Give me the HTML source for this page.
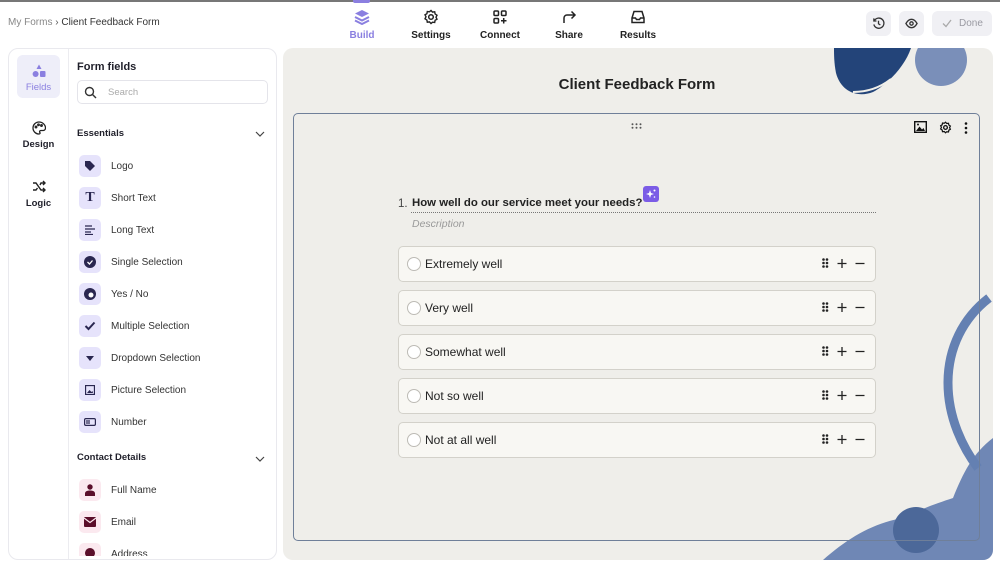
<!DOCTYPE html>
<html><head><meta charset="utf-8">
<style>
*{box-sizing:border-box;margin:0;padding:0}
body{width:1000px;height:568px;overflow:hidden;background:#fff;font-family:"Liberation Sans",sans-serif;color:#1f1f2a;position:relative}
.a{position:absolute}
.nav{position:absolute;top:9px;width:70px;text-align:center;font-size:10px;font-weight:bold;color:#222}
.nav svg{display:block;margin:0 auto 5px}
.btn{position:absolute;top:11px;height:25px;border-radius:6px;background:#f0f0f4}
.fi{position:absolute;left:79px;width:22px;height:22px;border-radius:5px;background:#e6e3fb}
.fl{position:absolute;left:111px;font-size:10px;color:#333}
.opt{position:absolute;left:398px;width:478px;height:36px;border:1px solid #d3d1ca;border-radius:5px;background:#f8f7f3}
.opt .r{position:absolute;left:8px;top:10px;width:14px;height:14px;border:1px solid #bdbbb5;border-radius:50%;background:#fff}
.opt .t{position:absolute;left:26px;top:10px;font-size:12px;color:#222}
.opt svg{position:absolute;right:10px;top:11px}
</style></head><body>
<div class="a" style="left:0;top:0;width:1000px;height:2px;background:#777"></div>
<div class="a" style="left:353px;top:0;width:17px;height:3px;background:#8b7fe0;border-radius:0 0 2px 2px"></div>
<div class="a" style="left:8px;top:17px;font-size:10px;color:#888">My Forms <span style="color:#555">›</span> <span style="color:#333">Client Feedback Form</span></div>

<div class="nav" style="left:327px;color:#8a7fe0"><svg width="16" height="16" viewBox="0 0 16 16"><path d="M8 1L15 4.5 8 8 1 4.5Z" fill="#8a7fe0"/><path d="M1 8l7 3.5 7-3.5M1 11.5l7 3.5 7-3.5" stroke="#8a7fe0" stroke-width="2" fill="none"/></svg>Build</div>
<div class="nav" style="left:396px"><svg width="16" height="16" viewBox="0 0 16 16"><circle cx="8" cy="8" r="2.3" fill="none" stroke="#222" stroke-width="1.5"/><path d="M8 1.5l1.5 1.6 2.2-.3.4 2.2 1.9 1.2-1 2 1 2-1.9 1.1-.4 2.2-2.2-.3L8 14.5l-1.5-1.6-2.2.3-.4-2.2L2 9.8l1-2-1-2 1.9-1.1.4-2.2 2.2.3Z" fill="none" stroke="#222" stroke-width="1.4"/></svg>Settings</div>
<div class="nav" style="left:465px"><svg width="16" height="16" viewBox="0 0 16 16" fill="none" stroke="#222" stroke-width="1.5"><rect x="2" y="2" width="4.5" height="4.5" rx="1"/><rect x="9.5" y="2" width="4.5" height="4.5" rx="1"/><rect x="2" y="9.5" width="4.5" height="4.5" rx="1"/><path d="M11.7 9v5.5M9 11.7h5.5"/></svg>Connect</div>
<div class="nav" style="left:534px"><svg width="16" height="16" viewBox="0 0 16 16" fill="none" stroke="#222" stroke-width="1.5"><path d="M3 14V9a3 3 0 013-3h8M10.5 2.5L14 6l-3.5 3.5"/></svg>Share</div>
<div class="nav" style="left:603px"><svg width="16" height="16" viewBox="0 0 16 16" fill="none" stroke="#222" stroke-width="1.5"><path d="M2 9l2-6.5h8L14 9v4.5H2Z M2 9h3.5l1 1.5h3l1-1.5H14"/></svg>Results</div>

<div class="btn" style="left:866px;width:25px"><svg class="a" style="left:6px;top:6px" width="13" height="13" viewBox="0 0 14 14" fill="none" stroke="#333" stroke-width="1.4"><path d="M2.5 4A5.5 5.5 0 1 1 2 8M2 1.5V4.3h2.8M7 4v3.3l2 1.3"/></svg></div>
<div class="btn" style="left:899px;width:25px"><svg class="a" style="left:6px;top:7px" width="13" height="11" viewBox="0 0 14 11" fill="none" stroke="#333" stroke-width="1.4"><path d="M1 5.5C3 2 5 1 7 1s4 1 6 4.5C11 9 9 10 7 10S3 9 1 5.5Z"/><circle cx="7" cy="5.5" r="1.8"/></svg></div>
<div class="btn" style="left:932px;width:60px;color:#9a9aa2;font-size:10px;line-height:25px;padding-left:27px">Done<svg class="a" style="left:10px;top:8px" width="10" height="9" viewBox="0 0 10 9" fill="none" stroke="#aaa" stroke-width="1.3"><path d="M1 4.5l3 3L9 1"/></svg></div>

<!-- sidebar -->
<div class="a" style="left:8px;top:48px;width:269px;height:512px;border:1px solid #e9e9ee;border-radius:10px"></div>
<div class="a" style="left:68px;top:49px;width:1px;height:510px;background:#ececf0"></div>
<div class="a" style="left:17px;top:55px;width:43px;height:43px;background:#eeeef9;border-radius:6px;text-align:center;font-size:9.5px;color:#8a7fe0;padding-top:9px"><svg width="14" height="14" viewBox="0 0 14 14" fill="#8a7fe0" style="display:block;margin:0 auto 4px"><path d="M7 0.5L9.5 5h-5Z"/><circle cx="3.6" cy="10" r="3"/><rect x="8" y="7" width="5.5" height="6" rx="1"/></svg>Fields</div>
<div class="a" style="left:17px;top:121px;width:43px;text-align:center;font-size:9.5px;font-weight:bold"><svg width="14" height="14" viewBox="0 0 14 14" fill="none" stroke="#222" stroke-width="1.3" style="display:block;margin:0 auto 4px"><path d="M7 1a6 6 0 100 12c1 0 1.3-.8.8-1.6-.5-.9 0-1.9 1.1-1.9H11a2.5 2.5 0 002.5-2.5C13.5 3.8 10.6 1 7 1Z"/><circle cx="4" cy="6" r=".8"/><circle cx="6.5" cy="3.8" r=".8"/><circle cx="9.5" cy="4.5" r=".8"/></svg>Design</div>
<div class="a" style="left:17px;top:180px;width:43px;text-align:center;font-size:9.5px;font-weight:bold"><svg width="14" height="13" viewBox="0 0 14 13" fill="none" stroke="#222" stroke-width="1.4" style="display:block;margin:0 auto 5px"><path d="M1 3h3l5 7h4M1 10h3l1.5-2M8 5l1-2h4M11 1l2 2-2 2M11 8l2 2-2 2"/></svg>Logic</div>

<div class="a" style="left:77px;top:61px;font-size:11px;font-weight:bold">Form fields</div>
<div class="a" style="left:77px;top:80px;width:191px;height:24px;border:1px solid #e4e4ea;border-radius:5px;font-size:9.5px;color:#aaa;padding:6px 0 0 30px">Search<svg class="a" style="left:6px;top:5px" width="13" height="13" viewBox="0 0 13 13" fill="none" stroke="#333" stroke-width="1.4"><circle cx="5.5" cy="5.5" r="4"/><path d="M8.5 8.5l3.5 3.5"/></svg></div>

<div class="a" style="left:77px;top:128px;font-size:9.5px;font-weight:bold">Essentials</div>
<svg class="a" style="left:255px;top:131px" width="10" height="6" viewBox="0 0 10 6" fill="none" stroke="#444" stroke-width="1.2"><path d="M1 1l4 4 4-4"/></svg>
<div class="fi" style="top:155px"><svg class="a" style="left:5px;top:5px" width="12" height="12" viewBox="0 0 12 12"><path d="M1 1h5l5 5-5 5-5-5Z" fill="#2a2750"/></svg></div><div class="fl" style="top:161px">Logo</div>
<div class="fi" style="top:187px;color:#2a2750;font:bold 14px 'Liberation Serif',serif;text-align:center;line-height:22px">T</div><div class="fl" style="top:193px">Short Text</div>
<div class="fi" style="top:219px"><svg class="a" style="left:6px;top:6px" width="10" height="10" viewBox="0 0 10 10" stroke="#2a2750" stroke-width="1.3"><path d="M0 1h7M0 4h10M0 7h6M0 9.5h8"/></svg></div><div class="fl" style="top:225px">Long Text</div>
<div class="fi" style="top:251px"><svg class="a" style="left:5px;top:5px" width="12" height="12" viewBox="0 0 12 12"><circle cx="6" cy="6" r="6" fill="#2a2750"/><path d="M3.5 6l2 2 3-3.5" stroke="#fff" stroke-width="1.3" fill="none"/></svg></div><div class="fl" style="top:257px">Single Selection</div>
<div class="fi" style="top:283px"><svg class="a" style="left:5px;top:5px" width="12" height="12" viewBox="0 0 12 12"><circle cx="6" cy="6" r="6" fill="#2a2750"/><circle cx="7" cy="7" r="2.5" fill="#fff"/></svg></div><div class="fl" style="top:289px">Yes / No</div>
<div class="fi" style="top:315px"><svg class="a" style="left:5px;top:5px" width="12" height="12" viewBox="0 0 12 12"><path d="M1.5 6l3 3 6-6.5" stroke="#2a2750" stroke-width="2" fill="none"/></svg></div><div class="fl" style="top:321px">Multiple Selection</div>
<div class="fi" style="top:347px"><svg class="a" style="left:7px;top:9px" width="8" height="5" viewBox="0 0 8 5"><path d="M0 0h8L4 5Z" fill="#2a2750"/></svg></div><div class="fl" style="top:353px">Dropdown Selection</div>
<div class="fi" style="top:379px"><svg class="a" style="left:6px;top:6px" width="10" height="10" viewBox="0 0 10 10"><rect x=".5" y=".5" width="9" height="9" fill="none" stroke="#2a2750" stroke-width="1.3"/><path d="M2 8l2.5-3 2 2 1-1L8 8Z" fill="#2a2750"/></svg></div><div class="fl" style="top:385px">Picture Selection</div>
<div class="fi" style="top:411px"><svg class="a" style="left:5px;top:7px" width="12" height="8" viewBox="0 0 12 8"><rect x=".6" y=".6" width="10.8" height="6.8" rx="1.3" fill="none" stroke="#2a2750" stroke-width="1.2"/><path d="M3 2v4M5 2v4" stroke="#2a2750" stroke-width="1.2"/></svg></div><div class="fl" style="top:417px">Number</div>

<div class="a" style="left:77px;top:452px;font-size:9.5px;font-weight:bold">Contact Details</div>
<svg class="a" style="left:255px;top:456px" width="10" height="6" viewBox="0 0 10 6" fill="none" stroke="#444" stroke-width="1.2"><path d="M1 1l4 4 4-4"/></svg>
<div class="fi" style="top:479px;background:#fbe9ef"><svg class="a" style="left:6px;top:5px" width="10" height="12" viewBox="0 0 10 12" fill="#5a0f2a"><circle cx="5" cy="3" r="2.7"/><path d="M0 12v-2.5C0 7.5 2 6.5 5 6.5s5 1 5 3V12Z"/></svg></div><div class="fl" style="top:485px">Full Name</div>
<div class="fi" style="top:511px;background:#fbe9ef"><svg class="a" style="left:5px;top:6px" width="12" height="10" viewBox="0 0 12 10"><rect width="12" height="10" rx="1" fill="#5a0f2a"/><path d="M0 1l6 4.5L12 1" stroke="#fbe9ef" stroke-width="1.2" fill="none"/></svg></div><div class="fl" style="top:517px">Email</div>
<div class="a" style="left:69px;top:543px;width:207px;height:13px;overflow:hidden"><div class="fi" style="left:10px;top:0;background:#fbe9ef"><div class="a" style="left:6px;top:5px;width:10px;height:10px;border-radius:50%;background:#5a0f2a"></div></div><div class="fl" style="left:42px;top:6px">Address</div></div>

<!-- canvas -->
<div class="a" style="left:283px;top:48px;width:710px;height:512px;background:#efeeea;border-radius:10px;overflow:hidden">
 <svg class="a" style="left:0;top:0" width="710" height="512" viewBox="0 0 710 512">
  <path d="M551 0H628C622 18 605 36 590 44 575 50 558 44 553 25 551 15 551 6 551 0Z" fill="#234479"/>
  <path d="M570 44c15 0 28-5 38-13" stroke="#f0efea" stroke-width="2" fill="none"/>
  <circle cx="658" cy="12" r="26" fill="#7a8fb9"/>
  <path d="M710 390C690 405 680 425 670 450 655 455 640 460 620 470 590 475 565 490 540 512H710Z" fill="#6f87b5"/>
  <path d="M706 250C680 270 665 300 665 335 665 370 680 400 695 420" stroke="#6480b2" stroke-width="9" fill="none"/>
  <circle cx="633" cy="482" r="23" fill="#4c6899"/>
 </svg>
 <div class="a" style="left:0;top:28px;width:708px;text-align:center;font-size:15px;font-weight:bold;color:#222">Client Feedback Form</div>
</div>
<div class="a" style="left:293px;top:113px;width:687px;height:428px;border:1.5px solid #6f7f99;border-radius:5px"></div>
<svg class="a" style="left:631px;top:123px" width="11" height="6" viewBox="0 0 11 6" fill="#555"><circle cx="1.5" cy="1.2" r="1"/><circle cx="5.5" cy="1.2" r="1"/><circle cx="9.5" cy="1.2" r="1"/><circle cx="1.5" cy="4.8" r="1"/><circle cx="5.5" cy="4.8" r="1"/><circle cx="9.5" cy="4.8" r="1"/></svg>
<svg class="a" style="left:914px;top:121px" width="13" height="12" viewBox="0 0 13 12"><rect x=".7" y=".7" width="11.6" height="10.6" fill="none" stroke="#111" stroke-width="1.4"/><path d="M2 10l3.5-4.5 2.5 3 1.5-1.5L11 10Z" fill="#111"/><circle cx="4" cy="3.5" r="1" fill="#111"/></svg>
<svg class="a" style="left:939px;top:121px" width="13" height="13" viewBox="0 0 16 16"><circle cx="8" cy="8" r="2.3" fill="none" stroke="#111" stroke-width="1.6"/><path d="M8 1.5l1.5 1.6 2.2-.3.4 2.2 1.9 1.2-1 2 1 2-1.9 1.1-.4 2.2-2.2-.3L8 14.5l-1.5-1.6-2.2.3-.4-2.2L2 9.8l1-2-1-2 1.9-1.1.4-2.2 2.2.3Z" fill="none" stroke="#111" stroke-width="1.5"/></svg>
<svg class="a" style="left:964px;top:122px" width="4" height="12" viewBox="0 0 4 12" fill="#111"><circle cx="2" cy="1.5" r="1.3"/><circle cx="2" cy="6" r="1.3"/><circle cx="2" cy="10.5" r="1.3"/></svg>

<div class="a" style="left:398px;top:198px;font-size:11.5px;color:#444">1.</div>
<div class="a" style="left:412px;top:197px;font-size:11.4px;font-weight:bold;color:#222">How well do our service meet your needs?</div>
<div class="a" style="left:643px;top:186px;width:16px;height:16px;border-radius:3px;background:#7b5ce6"><svg class="a" style="left:3px;top:3px" width="10" height="10" viewBox="0 0 10 10" fill="#fff"><path d="M4 1l1 3 3 1-3 1-1 3-1-3-3-1 3-1Z"/><circle cx="8.5" cy="1.5" r="1"/><circle cx="8.5" cy="8" r=".8"/></svg></div>
<div class="a" style="left:411px;top:212px;width:465px;border-top:1px dotted #777"></div>
<div class="a" style="left:412px;top:218px;font-size:10.5px;font-style:italic;color:#999">Description</div>

<svg width="0" height="0" style="position:absolute"><defs><g id="ctl"><g fill="#222"><circle cx="1.5" cy="1.5" r="1.3"/><circle cx="5" cy="1.5" r="1.3"/><circle cx="1.5" cy="5" r="1.3"/><circle cx="5" cy="5" r="1.3"/><circle cx="1.5" cy="8.5" r="1.3"/><circle cx="5" cy="8.5" r="1.3"/></g><path d="M20 1v9M15.5 5.5h9M33.5 5.5h9" stroke="#222" stroke-width="1.3"/></g></defs></svg>
<div class="opt" style="top:246px"><div class="r"></div><div class="t">Extremely well</div><svg width="43" height="11"><use href="#ctl"/></svg></div>
<div class="opt" style="top:290px"><div class="r"></div><div class="t">Very well</div><svg width="43" height="11"><use href="#ctl"/></svg></div>
<div class="opt" style="top:334px"><div class="r"></div><div class="t">Somewhat well</div><svg width="43" height="11"><use href="#ctl"/></svg></div>
<div class="opt" style="top:378px"><div class="r"></div><div class="t">Not so well</div><svg width="43" height="11"><use href="#ctl"/></svg></div>
<div class="opt" style="top:422px"><div class="r"></div><div class="t">Not at all well</div><svg width="43" height="11"><use href="#ctl"/></svg></div>
</body></html>
